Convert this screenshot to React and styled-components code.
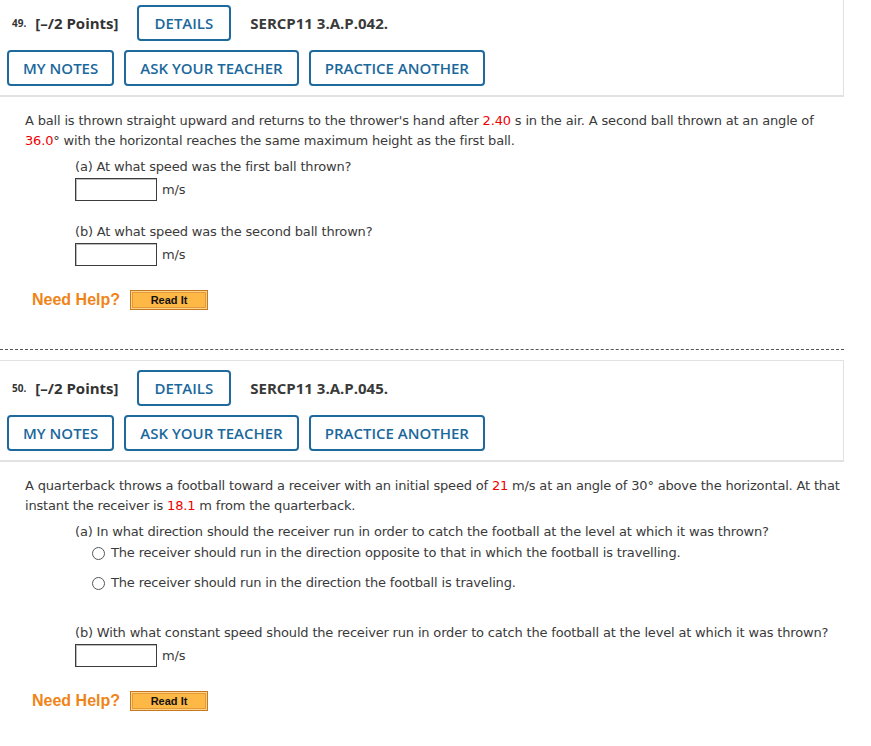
import React from 'react';
import styled, { createGlobalStyle } from 'styled-components';

const GlobalStyle = createGlobalStyle`
    body {
        margin: 0;
        background: #fff;
        font-family: "DejaVu Sans", Verdana, sans-serif;
        color: #3a3a3a;
    }
`;

const Page = styled.div`
    width: 844px;
    overflow: hidden;
`;

const Panel = styled.div`
    border: 1px solid #e2e2e2;
    border-left: none;
    border-bottom-width: 2px;
    padding: 9px 0 9px 7px;
    margin-top: ${(p) => (p.first ? '-5px' : '0')};
    display: flex;
    flex-direction: column;
    gap: 9px;
    font-family: "Open Sans", sans-serif;
`;

const HeaderRow = styled.div`
    display: flex;
    align-items: center;
    gap: 10px;
`;

const Number = styled.span`
    font-size: 10px;
    font-weight: 700;
    color: #333;
    margin-left: 5px;
`;

const Points = styled.span`
    font-size: 15px;
    font-weight: 700;
    color: #333;
    margin-left: -1px;
    margin-right: 8px;
`;

const Code = styled.span`
    font-size: 15px;
    font-weight: 700;
    color: #3a3a3a;
    margin-left: 9px;
`;

const Button = styled.button`
    height: 36px;
    padding: 0 ${(p) => p.pad || 14}px;
    background: #fff;
    border: 2px solid #1f6a9c;
    border-radius: 4px;
    color: #1b689c;
    font-family: "Open Sans", sans-serif;
    font-size: 15px;
    font-weight: 600;
    cursor: pointer;
`;

const Body = styled.div`
    padding: 14px 0 0 25px;
    font-size: 13px;
    line-height: 20px;
    letter-spacing: -0.17px;
`;

const Prompt = styled.div`
    width: 819px;
`;

const Red = styled.span`
    color: #ee0000;
`;

const Part = styled.div`
    margin: ${(p) => p.top || 6}px 0 0 50px;
`;

const AnswerRow = styled.div`
    display: flex;
    align-items: center;
    gap: 5px;
    margin-top: 1px;
`;

const Input = styled.div`
    width: 80px;
    height: 21px;
    border: 1px solid #3c3c3c;
    box-shadow: inset 1px 1px 0 #bbb;
    background: #fff;
`;

const Option = styled.label`
    display: flex;
    align-items: center;
    gap: 6px;
    margin: ${(p) => (p.gap ? '10px' : '1px')} 0 0 17px;
`;

const Radio = styled.span`
    width: 11px;
    height: 11px;
    border: 1px solid #555;
    border-radius: 50%;
    background: #fff;
`;

const HelpRow = styled.div`
    display: flex;
    align-items: center;
    gap: 10px;
    margin: ${(p) => p.top}px 0 0 7px;
    letter-spacing: 0;
`;

const HelpLabel = styled.span`
    font-family: "Liberation Sans", Arial, sans-serif;
    font-weight: 700;
    font-size: 16px;
    color: #ef8419;
`;

const ReadIt = styled.button`
    width: 78px;
    height: 20px;
    padding: 0;
    border: 1px solid #c6781f;
    box-shadow: inset 0 0 0 1px #ffd28a, inset 0 0 0 2px #e39a3a;
    background: #feb845;
    font-family: "Liberation Sans", Arial, sans-serif;
    font-weight: 700;
    font-size: 11px;
    color: #111;
`;

const Divider = styled.div`
    border-top: 1px dashed #555;
    margin: 39px 0 10px;
`;

function Header({ num, code, first }) {
    return (
        <Panel first={first}>
            <HeaderRow>
                <Number>{num}.</Number>
                <Points>[–/2 Points]</Points>
                <Button pad={16}>DETAILS</Button>
                <Code>{code}</Code>
            </HeaderRow>
            <HeaderRow>
                <Button pad={14}>MY NOTES</Button>
                <Button pad={14}>ASK YOUR TEACHER</Button>
                <Button pad={14}>PRACTICE ANOTHER</Button>
            </HeaderRow>
        </Panel>
    );
}

function Answer() {
    return (
        <AnswerRow>
            <Input />
            <span>m/s</span>
        </AnswerRow>
    );
}

function Help({ top }) {
    return (
        <HelpRow top={top}>
            <HelpLabel>Need Help?</HelpLabel>
            <ReadIt>Read It</ReadIt>
        </HelpRow>
    );
}

export default function App() {
    return (
        <Page>
            <GlobalStyle />
            <Header num={49} code="SERCP11 3.A.P.042." first />
            <Body>
                <Prompt>
                    A ball is thrown straight upward and returns to the thrower's hand after{' '}
                    <Red>2.40</Red> s in the air. A second ball thrown at an angle of{' '}
                    <Red>36.0</Red>° with the horizontal reaches the same maximum height as the
                    first ball.
                </Prompt>
                <Part>
                    (a) At what speed was the first ball thrown?
                    <Answer />
                </Part>
                <Part top={21}>
                    (b) At what speed was the second ball thrown?
                    <Answer />
                </Part>
                <Help top={24} />
            </Body>
            <Divider />
            <Header num={50} code="SERCP11 3.A.P.045." />
            <Body>
                <Prompt>
                    A quarterback throws a football toward a receiver with an initial speed of{' '}
                    <Red>21</Red> m/s at an angle of 30° above the horizontal. At that instant the
                    receiver is <Red>18.1</Red> m from the quarterback.
                </Prompt>
                <Part>
                    (a) In what direction should the receiver run in order to catch the football at
                    the level at which it was thrown?
                    <Option>
                        <Radio />
                        The receiver should run in the direction opposite to that in which the
                        football is travelling.
                    </Option>
                    <Option gap>
                        <Radio />
                        The receiver should run in the direction the football is traveling.
                    </Option>
                </Part>
                <Part top={30}>
                    (b) With what constant speed should the receiver run in order to catch the
                    football at the level at which it was thrown?
                    <Answer />
                </Part>
                <Help top={24} />
            </Body>
        </Page>
    );
}
